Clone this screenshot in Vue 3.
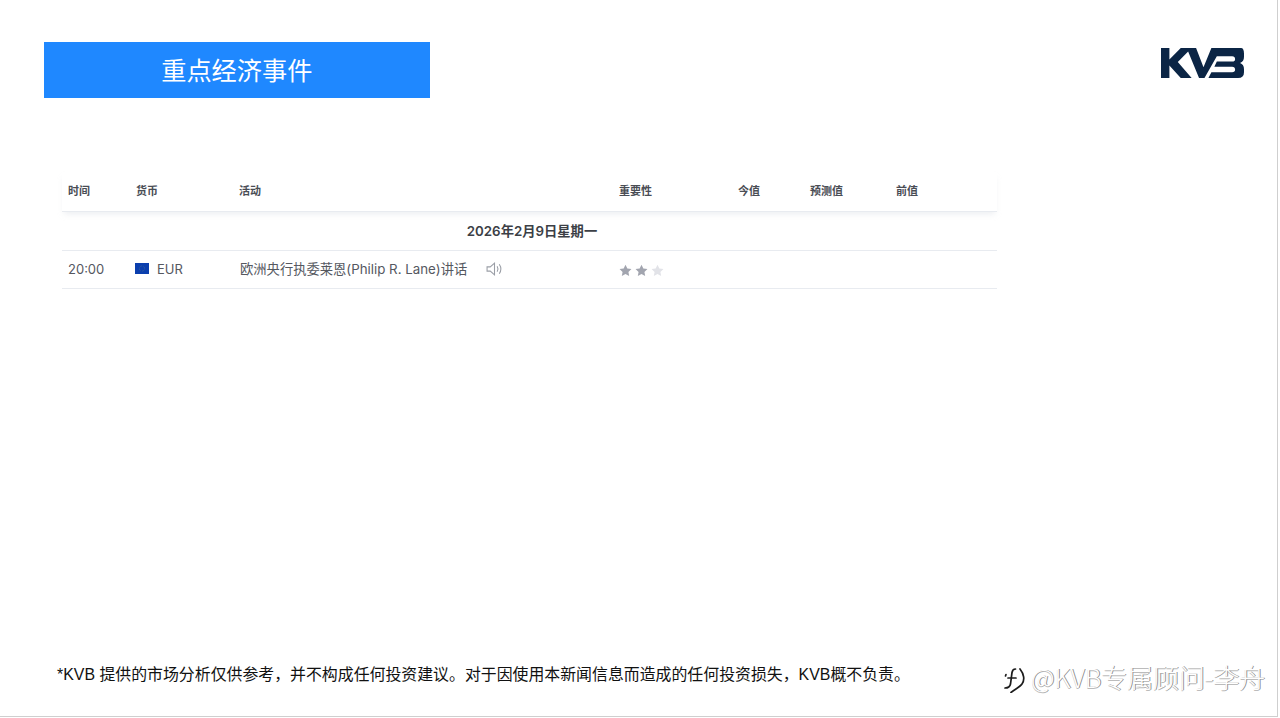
<script setup>
const columns = [
  { label: '时间', cls: 'c-time' },
  { label: '货币', cls: 'c-cur' },
  { label: '活动', cls: 'c-act' },
  { label: '重要性', cls: 'c-imp' },
  { label: '今值', cls: 'c-now' },
  { label: '预测值', cls: 'c-fc' },
  { label: '前值', cls: 'c-prev' },
]
const stars = [true, true, false]
</script>

<template>
  <div class="slide">
    <header class="top">
      <h1 class="title">重点经济事件</h1>
      <svg class="logo" viewBox="0 0 84 31" preserveAspectRatio="none" aria-label="KVB">
        <path fill="#0b2545" d="M0 0h8.500v12L20 0h11L17 14.500 31 31H20L8.500 18v13H0z" />
        <path fill="#0b2545" d="M26 0h9.500l7.500 20L51 0h30q3 0 3 6v3q0 5-4 6.500q4 1.500 4 6.500v3q0 6-6 6H48l3-6h21q3 0 3-2.500q0-3-3-3H54l2.500-5.500H72q3 0 3-2.500q0-3-3-3H56.500L44 31h-5.500z" />
      </svg>
    </header>

    <section class="table">
      <div class="head">
        <span v-for="c in columns" :key="c.label" :class="c.cls">{{ c.label }}</span>
      </div>
      <div class="date">2026年2月9日星期一</div>
      <div class="row">
        <span class="c-time time">20:00</span>
        <span class="c-cur cur">
          <svg class="flag" viewBox="0 0 14 11">
            <rect width="14" height="11" fill="#0b3fae" />
            <circle cx="7" cy="5.500" r="2.600" fill="none" stroke="#4a6a8c" stroke-width="0.800" stroke-dasharray="0.800 0.800" />
          </svg>
          EUR
        </span>
        <span class="c-act act">
          欧洲央行执委莱恩(Philip R. Lane)讲话
          <svg class="sound" viewBox="0 0 16 14" fill="none" stroke="#9a9ea6" stroke-width="1">
            <path d="M1 5h3l4-3.500v11L4 9H1z" />
            <path d="M10.500 4.500q1.500 2.500 0 5" />
            <path d="M12.500 2.500q3 4.500 0 9" />
          </svg>
        </span>
        <span class="c-imp stars">
          <svg v-for="(on, i) in stars" :key="i" class="star" viewBox="0 0 12 12">
            <path :fill="on ? '#a2a5af' : '#e2e3e8'" d="M6 .6l1.700 3.500 3.800.5-2.800 2.700.7 3.800L6 9.300l-3.400 1.800.7-3.800L.5 4.600l3.800-.5z" />
          </svg>
        </span>
      </div>
    </section>

    <footer class="note">*KVB 提供的市场分析仅供参考，并不构成任何投资建议。对于因使用本新闻信息而造成的任何投资损失，KVB概不负责。</footer>

    <div class="mark">
      <svg class="mark-icon" viewBox="0 0 24 32" fill="none" stroke="#1c1c1c" stroke-width="1.700" stroke-linecap="round">
        <path d="M12.500 8C10 8 9.300 9.500 9 11.500L7.500 23C7 25.500 5 27 2 27" />
        <path d="M5 17H13" />
        <path d="M17 8C21 13 22 19 19 23C17 26 12 28 8 31.500" />
        <path d="M2.500 15L3 13.500" />
      </svg>
      <span class="mark-text">@KVB专属顾问-李舟</span>
    </div>
  </div>
</template>

<style>
html, body { margin: 0; background: #fff; }
</style>

<style scoped>
.slide {
  position: relative;
  box-sizing: border-box;
  width: 1278px;
  height: 717px;
  padding: 42px 33px 0 44px;
  background: #fff;
  border-right: 1px solid #cfcfcf;
  border-bottom: 1px solid #cfcfcf;
  display: flex;
  flex-direction: column;
  font-family: Inter, "Noto Sans CJK SC", sans-serif;
}
.top { display: flex; justify-content: space-between; align-items: flex-start; }
.title {
  margin: 0;
  width: 385.500px;
  height: 56px;
  background: #1f88ff;
  color: #fff;
  font: 400 25.200px/54px "Noto Sans CJK SC", sans-serif;
  text-align: center;
}
.logo { width: 83px; height: 30px; margin-top: 6px; }

.table { width: 935px; margin: 74px 0 0 18px; }
.head, .row { display: flex; align-items: center; }
.head {
  height: 39.500px;
  padding-bottom: 2px;
  font-size: 11px;
  font-weight: 600;
  color: #4a4d55;
  border-bottom: 1px solid #e8ebf0;
  box-shadow: 0 4px 6px -2px rgba(200, 205, 215, 0.35);
  box-sizing: border-box;
}
.c-time { width: 74px; padding-left: 6px; box-sizing: border-box; }
.c-cur { width: 103px; }
.c-act { width: 380px; }
.c-imp { width: 119px; }
.c-now { width: 72px; }
.c-fc { width: 86px; }
.date {
  height: 39.500px;
  box-sizing: border-box;
  padding-left: 5px;
  border-bottom: 1px solid #e8ebf0;
  text-align: center;
  font-size: 13.300px;
  font-weight: 600;
  line-height: 38px;
  color: #3c3f46;
}
.row {
  height: 38px;
  box-sizing: border-box;
  padding-bottom: 2px;
  border-bottom: 1px solid #e8ebf0;
  font-size: 13px;
  color: #55585f;
}
.time { font-size: 13px; }
.cur { display: flex; align-items: center; gap: 8px; margin-left: -1px; margin-right: 1px; }
.flag { width: 14px; height: 11px; }
.act { display: flex; align-items: center; gap: 19px; padding-left: 1px; box-sizing: border-box; white-space: nowrap; font-size: 13.300px; }
.sound { width: 17px; height: 16px; }
.stars { display: flex; gap: 3px; padding-top: 3px; }
.star { width: 13px; height: 13px; }

.note {
  position: absolute;
  left: 57px;
  top: 665px;
  font-family: "Liberation Sans", "Noto Sans CJK SC", sans-serif;
  font-size: 15.900px;
  line-height: 20px;
  color: #111;
  white-space: nowrap;
}
.mark {
  position: absolute;
  left: 1003px;
  top: 661px;
  display: flex;
  align-items: center;
  gap: 4px;
}
.mark-icon { width: 24px; height: 32px; }
.mark-text {
  font: 300 25.900px/30px "Noto Sans CJK SC", sans-serif;
  color: #fff;
  text-shadow: 1px 0 0 #8f8f8f, 0 1px 0 #bcbcbc;
  white-space: nowrap;
}
</style>
